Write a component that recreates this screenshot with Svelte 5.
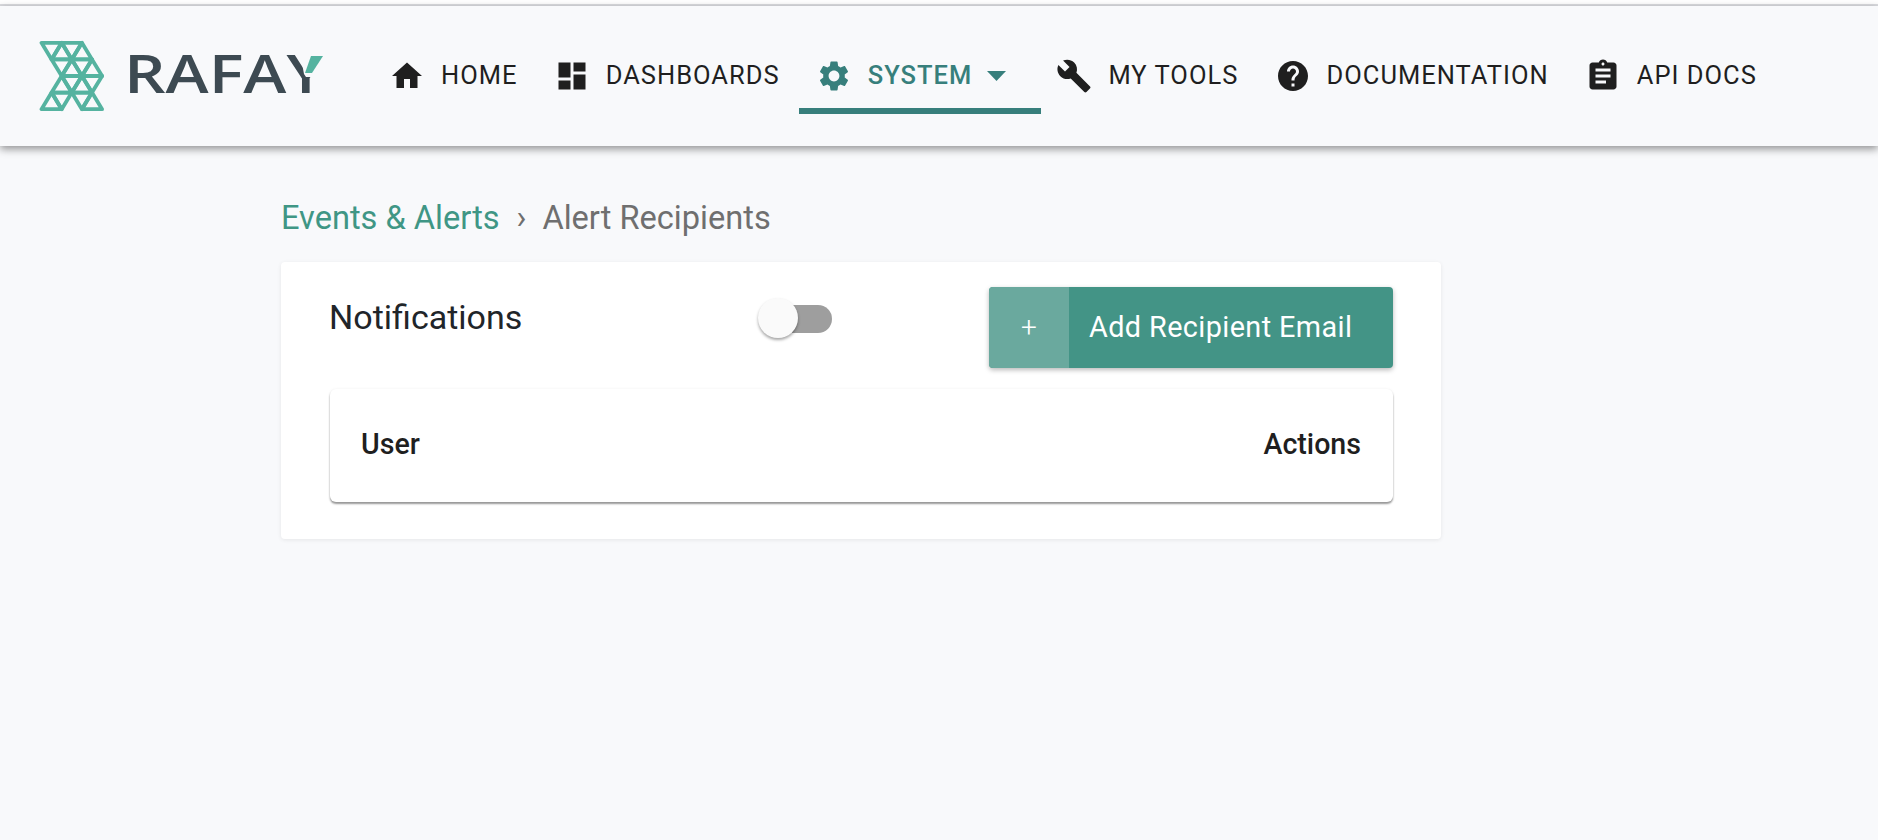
<script>
  const nav = [
    { label: 'HOME', icon: 'home' },
    { label: 'DASHBOARDS', icon: 'dash' },
    { label: 'SYSTEM', icon: 'gear', active: true },
    { label: 'MY TOOLS', icon: 'wrench' },
    { label: 'DOCUMENTATION', icon: 'help' },
    { label: 'API DOCS', icon: 'clip' }
  ];
  const paths = {
    home: 'M10 20v-6h4v6h5v-8h3L12 3 2 12h3v8z',
    dash: 'M3 13h8V3H3v10zm0 8h8v-6H3v6zm10 0h8V11h-8v10zm0-18v6h8V3h-8z',
    gear: 'M19.14 12.94c.04-.3.06-.61.06-.94 0-.32-.02-.64-.07-.94l2.03-1.58c.18-.14.23-.41.12-.61l-1.92-3.32c-.12-.22-.37-.29-.59-.22l-2.39.96c-.5-.38-1.03-.7-1.62-.94l-.36-2.54c-.04-.24-.24-.41-.48-.41h-3.84c-.24 0-.43.17-.47.41l-.36 2.54c-.59.24-1.13.57-1.62.94l-2.39-.96c-.22-.08-.47 0-.59.22L2.74 8.87c-.12.21-.08.47.12.61l2.03 1.58c-.05.3-.09.63-.09.94s.02.64.07.94l-2.03 1.58c-.18.14-.23.41-.12.61l1.92 3.32c.12.22.37.29.59.22l2.39-.96c.5.38 1.03.7 1.62.94l.36 2.54c.05.24.24.41.48.41h3.84c.24 0 .44-.17.47-.41l.36-2.54c.59-.24 1.13-.56 1.62-.94l2.39.96c.22.08.47 0 .59-.22l1.92-3.32c.12-.22.07-.47-.12-.61l-2.01-1.58zM12 15.6c-1.98 0-3.6-1.62-3.6-3.6s1.62-3.6 3.6-3.6 3.6 1.62 3.6 3.6-1.62 3.6-3.6 3.6z',
    wrench: 'M22.7 19l-9.1-9.1c.9-2.3.4-5-1.5-6.9-2-2-5-2.4-7.4-1.3L9 6 6 9 1.6 4.7C.4 7.1.9 10.1 2.9 12.1c1.9 1.9 4.6 2.4 6.9 1.5l9.1 9.1c.4.4 1 .4 1.4 0l2.3-2.3c.5-.4.5-1.1.1-1.4z',
    help: 'M12 2C6.48 2 2 6.48 2 12s4.48 10 10 10 10-4.48 10-10S17.52 2 12 2zm1 17h-2v-2h2v2zm2.07-7.75l-.9.92C13.45 12.9 13 13.5 13 15h-2v-.5c0-1.1.45-2.1 1.17-2.83l1.24-1.26c.37-.36.59-.86.59-1.41 0-1.1-.9-2-2-2s-2 .9-2 2H8c0-2.21 1.79-4 4-4s4 1.79 4 4c0 .88-.36 1.68-.93 2.25z',
    clip: 'M19 3h-4.18C14.4 1.84 13.3 1 12 1c-1.3 0-2.4.84-2.82 2H5c-1.1 0-2 .9-2 2v14c0 1.1.9 2 2 2h14c1.1 0 2-.9 2-2V5c0-1.1-.9-2-2-2zm-7 0c.55 0 1 .45 1 1s-.45 1-1 1-1-.45-1-1 .45-1 1-1zm2 14H7v-2h7v2zm3-4H7v-2h10v2zm0-4H7V7h10v2z'
  };
  const W = 10.1, H = 16.6;
  const tri = [
    [0, 0, 2, 1, 'd'], [0, 1, 3, 2, 'u'], [0, 2, 4, 3, 'd'], [0, 3, 5, 4, 'u'],
    [1, 1, 3, 2, 'd'], [1, 2, 4, 3, 'u'], [1, 3, 5, 4, 'd'], [1, 4, 6, 5, 'u'],
    [2, 1, 3, 2, 'u'], [2, 2, 4, 3, 'd'], [2, 3, 5, 4, 'u'], [2, 4, 6, 5, 'd'],
    [3, 0, 2, 1, 'u'], [3, 1, 3, 2, 'd'], [3, 3, 5, 4, 'd'], [3, 4, 6, 5, 'u']
  ];
  const lat = tri.map(([r, a, b, c, d]) => {
    const top = 2.8 + r * H, bot = top + H;
    const base = d === 'd' ? top : bot;
    const apex = d === 'd' ? bot : top;
    return `${a * W + 2.5},${base} ${b * W + 2.5},${base} ${c * W + 2.5},${apex}`;
  });
</script>

<div class="page">
  <div class="strip"></div>
  <header class="bar">
    <div class="logo">
      <svg class="mark" width="66" height="72" viewBox="0 0 66 72" aria-hidden="true">
        <g fill="none" stroke="#55b3a0" stroke-width="3.8" stroke-linejoin="round">
          {#each lat as p}<polygon points={p} />{/each}
        </g>
      </svg>
      <svg class="word" width="206" height="78" viewBox="0 0 206 78">
        <text x="0" y="60" textLength="201" lengthAdjust="spacingAndGlyphs" class="wordtext">RAFAY</text>
        <polygon points="176,20 206,20 206,44 182,44 180,41" fill="#f8f9fb" />
        <polygon points="187,23 199,23 188,40 181,40" fill="#55b3a0" />
      </svg>
    </div>
    <nav class="nav">
      {#each nav as n}
        <div class="item" class:active={n.active}>
          <svg class="ico" width="36" height="36" viewBox="0 0 24 24" aria-hidden="true"><path d={paths[n.icon]} fill="currentColor" /></svg>
          <span class="label">{n.label}</span>
          {#if n.active}
            <svg class="caret" width="19" height="10" viewBox="0 0 19 10" aria-hidden="true"><path d="M0 0h19L9.5 10z" fill="currentColor" /></svg>
          {/if}
        </div>
      {/each}
    </nav>
  </header>

  <main class="main">
    <div class="crumbs">
      <span class="link">Events &amp; Alerts</span>
      <span class="sep">›</span>
      <span class="cur">Alert Recipients</span>
    </div>
    <section class="card">
      <div class="top">
        <div class="title">Notifications</div>
        <div class="switch"><span class="track"></span><span class="knob"></span></div>
        <div class="btn"><span class="plus">+</span><span class="btntext">Add Recipient Email</span></div>
      </div>
      <div class="table">
        <span>User</span>
        <span>Actions</span>
      </div>
    </section>
  </main>
</div>

<style>
  :global(body) {
    margin: 0;
    background: #f8f9fb;
    font-family: Roboto, "Liberation Sans", sans-serif;
  }
  .page {
    width: 1878px;
    height: 840px;
    overflow: hidden;
    background: #f8f9fb;
  }
  .strip {
    height: 4px;
    background: #fff;
    border-bottom: 2px solid #dcdde1;
  }
  .bar {
    height: 140px;
    background: #f8f9fb;
    display: flex;
    align-items: flex-start;
    box-shadow: 0 3px 8px rgba(0, 0, 0, 0.42);
    position: relative;
  }
  .logo {
    display: flex;
    align-items: flex-start;
    margin: 27px 0 0 39px;
    width: 350px;
    flex: none;
    filter: blur(0.5px);
  }
  .mark { display: block; margin-top: 7px; }
  .word { display: block; margin-left: 19px; }
  .wordtext {
    font-family: "Open Sans", sans-serif;
    font-weight: 600;
    font-size: 52px;
    fill: #3d4a52;
  }
  .nav {
    display: flex;
    align-items: flex-start;
    gap: 36.2px;
  }
  .item {
    display: flex;
    align-items: center;
    height: 60px;
    padding-top: 40px;
    color: #1f1f1f;
    font-size: 25.5px;
    letter-spacing: 1px;
    position: relative;
  }
  .ico { flex: none; display: block; }
  .label { margin-left: 16px; margin-bottom: 3px; white-space: nowrap; }
  .item.active {
    color: #377f7c;
    font-weight: 500;
  }
  .item.active::after {
    content: "";
    position: absolute;
    left: -17px;
    right: -21px;
    top: 102px;
    height: 6px;
    background: #377f7c;
  }
  .caret { margin: 0 14px 0 15px; }
  .main {
    margin-left: 281px;
    width: 1160px;
  }
  .crumbs {
    display: flex;
    align-items: center;
    height: 40px;
    margin-top: 52px;
    font-size: 32.6px;
    color: #6f6f6f;
  }
  .link { color: #3f9685; }
  .sep { margin: 0 16px 0 17px; color: #6f6f6f; }
  .card {
    margin-top: 24px;
    background: #fff;
    height: 277px;
    box-sizing: border-box;
    padding: 25px 48px 0 49px;
    border-radius: 4px;
    box-shadow: 0 1px 4px rgba(0, 0, 0, 0.08);
  }
  .top {
    display: flex;
    align-items: flex-start;
    height: 102px;
  }
  .title {
    font-size: 34px;
    color: #212529;
    width: 429px;
    margin-left: -1px;
    line-height: 40px;
    margin-top: 10px;
  }
  .switch {
    position: relative;
    width: 74px;
    height: 41px;
    margin-top: 11px;
  }
  .track {
    position: absolute;
    left: 20px;
    right: 0;
    top: 7px;
    height: 28px;
    border-radius: 14px;
    background: #9e9e9e;
  }
  .knob {
    position: absolute;
    left: 0;
    top: 0;
    width: 40px;
    height: 40px;
    border-radius: 50%;
    background: #fafafa;
    box-shadow: 0 2px 3px rgba(0, 0, 0, 0.35);
  }
  .btn {
    margin-left: auto;
    width: 404px;
    height: 81px;
    display: flex;
    background: #439486;
    border-radius: 4px;
    overflow: hidden;
    color: #fff;
    box-shadow: 0 2px 5px rgba(0, 0, 0, 0.28);
  }
  .plus {
    width: 80px;
    background: #6aa99e;
    display: flex;
    align-items: center;
    justify-content: center;
    font-size: 28px;
    font-weight: 300;
  }
  .btntext {
    margin-left: 20px;
    font-size: 28.8px;
    letter-spacing: 0.4px;
    line-height: 81px;
  }
  .table {
    height: 113px;
    box-sizing: border-box;
    padding: 0 32px 3px 31px;
    background: #fff;
    border-radius: 6px;
    box-shadow: 0 2px 2px rgba(0, 0, 0, 0.4), 0 0 3px rgba(0, 0, 0, 0.06);
    display: flex;
    justify-content: space-between;
    align-items: center;
    font-size: 28.6px;
    font-weight: 500;
    color: #1f1f1f;
  }
</style>
